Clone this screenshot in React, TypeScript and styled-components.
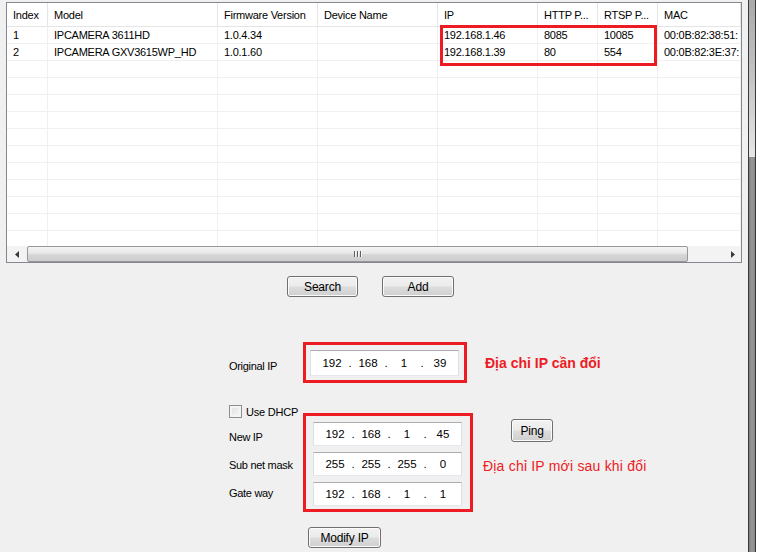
import React from "react"
import styled, { createGlobalStyle } from "styled-components"

const GlobalStyle = createGlobalStyle`
    html, body {
        margin: 0;
        padding: 0;
        background: #ffffff;
    }
    body {
        font-family: "Liberation Sans", Arial, sans-serif;
        font-size: 11px;
        letter-spacing: -0.25px;
        color: #000;
    }
`

type Device = {
    index: string
    model: string
    firmware: string
    name: string
    ip: string
    http: string
    rtsp: string
    mac: string
}

const devices: Device[] = [
    {
        index: "1",
        model: "IPCAMERA 3611HD",
        firmware: "1.0.4.34",
        name: "",
        ip: "192.168.1.46",
        http: "8085",
        rtsp: "10085",
        mac: "00:0B:82:38:51:",
    },
    {
        index: "2",
        model: "IPCAMERA GXV3615WP_HD",
        firmware: "1.0.1.60",
        name: "",
        ip: "192.168.1.39",
        http: "80",
        rtsp: "554",
        mac: "00:0B:82:3E:37:",
    },
]

const columns = ["Index", "Model", "Firmware Version", "Device Name", "IP", "HTTP P...", "RTSP P...", "MAC"]
const COLS = "41px 170px 100px 120px 100px 60px 60px 1fr"

const Page = styled.div`
    display: flex;
    height: 552px;
    overflow: hidden;
`

const Main = styled.div`
    width: 748px;
    flex-shrink: 0;
    background: #f0f0f0;
    display: flex;
    flex-direction: column;
`

const SideStrip = styled.div`
    width: 6px;
    flex-shrink: 0;
    border-left: 1px solid #3a3a3a;
    border-right: 1px solid #3a3a3a;
    display: flex;
    flex-direction: column;
`

const StripTrack = styled.div`
    height: 157px;
    background: linear-gradient(to bottom, #a9a9a9 0%, #c4c4c4 50%, #e6e6e6 100%);
`

const StripThumb = styled.div`
    flex: 1;
    background: linear-gradient(to right, #7f7f7f, #9a9a9a 50%, #858585);
`

const WhiteFill = styled.div`
    flex: 1;
    background: #fff;
`

const ListView = styled.div`
    margin: 2px 0 0 6px;
    width: 736px;
    height: 261px;
    box-sizing: border-box;
    border: 1px solid #828790;
    background: #fff;
    display: flex;
    flex-direction: column;
`

const TableArea = styled.div`
    position: relative;
    flex: 1;
    overflow: hidden;
`

const HeaderRow = styled.div`
    display: grid;
    grid-template-columns: ${COLS};
    height: 23px;
    border-bottom: 1px solid #e5e5e5;
`

const HeaderCell = styled.div`
    display: flex;
    align-items: center;
    padding: 1px 6px 0;
    border-right: 1px solid #e5e5e5;
    white-space: nowrap;
    overflow: hidden;
`

const Row = styled.div`
    display: grid;
    grid-template-columns: ${COLS};
    height: 17px;
`

const Cell = styled.div`
    display: flex;
    align-items: center;
    padding: 0 6px;
    border-right: 1px solid #f0f0f0;
    border-bottom: 1px solid #f0f0f0;
    white-space: nowrap;
    overflow: hidden;
`

const Highlight = styled.div`
    position: absolute;
    left: 433px;
    top: 22px;
    width: 217px;
    height: 41px;
    box-sizing: border-box;
    border: 3px solid #ed1c24;
    pointer-events: none;
`

const HScroll = styled.div`
    height: 16px;
    background: #f3f3f3;
    display: flex;
    align-items: stretch;
`

const ArrowBox = styled.div<{ $w: number }>`
    width: ${(p) => p.$w}px;
    display: flex;
    align-items: center;
    justify-content: center;
`

const Thumb = styled.div`
    width: 661px;
    box-sizing: border-box;
    border: 1px solid #979797;
    border-radius: 2px;
    background: linear-gradient(to bottom, #f4f4f4 0%, #e8e8e8 45%, #d6d6d6 55%, #cdcdcd 100%);
    display: flex;
    align-items: center;
    justify-content: center;
    gap: 1px;
`

const Grip = styled.span`
    width: 1px;
    height: 6px;
    background: #5e5e5e;
    box-shadow: 1px 0 0 #f7f7f7;
    margin-right: 1px;
`

const TrackRest = styled.div`
    flex: 1;
`

const ButtonRow = styled.div`
    display: flex;
    gap: 24px;
    margin-top: 13px;
    padding-left: 287px;
`

const WinButton = styled.button<{ $w: number; $h?: number }>`
    width: ${(p) => p.$w}px;
    height: ${(p) => p.$h ?? 21}px;
    padding: 0;
    box-sizing: border-box;
    border: 1px solid #707070;
    border-radius: 3px;
    background: linear-gradient(to bottom, #f2f2f2 0%, #ebebeb 48%, #dddddd 52%, #cfcfcf 100%);
    box-shadow: inset 0 0 0 1px #fbfbfb;
    font-family: "Liberation Sans", Arial, sans-serif;
    font-size: 12px;
    letter-spacing: -0.2px;
    color: #000;
`

const OriginalRow = styled.div`
    display: flex;
    align-items: center;
    margin-top: 45px;
    padding-left: 229px;
`

const FieldLabel = styled.div<{ $h?: number; $drop?: number }>`
    width: 74px;
    height: ${(p) => (p.$h ? `${p.$h}px` : "auto")};
    padding-top: ${(p) => p.$drop ?? 0}px;
    display: flex;
    align-items: center;
    letter-spacing: -0.3px;
    white-space: nowrap;
`

const RedBox = styled.div<{ $w: number; $h: number; $pad: string }>`
    width: ${(p) => p.$w}px;
    height: ${(p) => p.$h}px;
    box-sizing: border-box;
    border: 3px solid #ed1c24;
    padding: ${(p) => p.$pad};
    display: flex;
    flex-direction: column;
    gap: 6px;
    flex-shrink: 0;
`

const IpField = styled.div<{ $h: number }>`
    width: 149px;
    height: ${(p) => p.$h}px;
    box-sizing: border-box;
    background: #fff;
    border: 1px solid #dbdfe6;
    border-top-color: #abadb3;
    border-bottom-color: #e3e9ef;
    display: flex;
    align-items: center;
    padding-left: 8px;
    font-size: 11.5px;
    letter-spacing: 0;
`

const Octet = styled.span`
    width: 26px;
    text-align: center;
`

const Dot = styled.span`
    width: 10px;
    text-align: center;
`

const Note = styled.div<{ $bold?: boolean }>`
    color: #ed1c24;
    font-weight: ${(p) => (p.$bold ? 700 : 400)};
    font-size: 14px;
    letter-spacing: ${(p) => (p.$bold ? "0" : "0.2px")};
    white-space: nowrap;
`

const DhcpSection = styled.div`
    display: flex;
    margin-top: 22px;
    padding-left: 229px;
`

const LabelColumn = styled.div`
    display: flex;
    flex-direction: column;
    width: 74px;
`

const CheckRow = styled.label`
    display: flex;
    align-items: center;
    gap: 4px;
    height: 13px;
    letter-spacing: -0.2px;
    white-space: nowrap;
`

const CheckBox = styled.span`
    width: 13px;
    height: 13px;
    box-sizing: border-box;
    border: 1px solid #8e8f8f;
    background: linear-gradient(135deg, #dcdcdc, #fbfbfb);
    box-shadow: inset 0 0 0 2px #f4f4f4;
`

const LabelStack = styled.div`
    display: flex;
    flex-direction: column;
    margin-top: 5px;
`

const BoxColumn = styled.div`
    margin-top: 8px;
`

const SideColumn = styled.div`
    display: flex;
    flex-direction: column;
`

const PingWrap = styled.div`
    margin: 14px 0 0 38px;
`

const SideNote = styled.div`
    margin: 16px 0 0 10px;
`

const ModifyRow = styled.div`
    margin-top: 15px;
    padding-left: 308px;
`

const IpValue: React.FC<{ value: string; h: number }> = ({ value, h }) => {
    const parts = value.split(".")
    return (
        <IpField $h={h}>
            {parts.map((p, i) => (
                <React.Fragment key={i}>
                    <Octet>{p}</Octet>
                    {i < parts.length - 1 && <Dot>.</Dot>}
                </React.Fragment>
            ))}
        </IpField>
    )
}

const LeftArrow = () => (
    <svg width="4" height="7" viewBox="0 0 4 7">
        <polygon points="4,0 4,7 0,3.5" fill="#3c3c3c" />
    </svg>
)

const RightArrow = () => (
    <svg width="4" height="7" viewBox="0 0 4 7">
        <polygon points="0,0 0,7 4,3.5" fill="#3c3c3c" />
    </svg>
)

const App: React.FC = () => {
    const emptyRows = Array.from({ length: 12 })

    return (
        <>
            <GlobalStyle />
            <Page>
                <Main>
                    <ListView>
                        <TableArea>
                            <HeaderRow>
                                {columns.map((c) => (
                                    <HeaderCell key={c}>{c}</HeaderCell>
                                ))}
                            </HeaderRow>
                            {devices.map((d) => (
                                <Row key={d.index}>
                                    <Cell>{d.index}</Cell>
                                    <Cell>{d.model}</Cell>
                                    <Cell>{d.firmware}</Cell>
                                    <Cell>{d.name}</Cell>
                                    <Cell>{d.ip}</Cell>
                                    <Cell>{d.http}</Cell>
                                    <Cell>{d.rtsp}</Cell>
                                    <Cell>{d.mac}</Cell>
                                </Row>
                            ))}
                            {emptyRows.map((_, i) => (
                                <Row key={`e${i}`}>
                                    {columns.map((c) => (
                                        <Cell key={c} />
                                    ))}
                                </Row>
                            ))}
                            <Highlight />
                        </TableArea>
                        <HScroll>
                            <ArrowBox $w={20}>
                                <LeftArrow />
                            </ArrowBox>
                            <Thumb>
                                <Grip />
                                <Grip />
                                <Grip />
                            </Thumb>
                            <TrackRest />
                            <ArrowBox $w={17}>
                                <RightArrow />
                            </ArrowBox>
                        </HScroll>
                    </ListView>

                    <ButtonRow>
                        <WinButton $w={71}>Search</WinButton>
                        <WinButton $w={72}>Add</WinButton>
                    </ButtonRow>

                    <OriginalRow>
                        <FieldLabel $drop={6}>Original IP</FieldLabel>
                        <RedBox $w={164} $h={41} $pad="5px 5px 4px 4px">
                            <IpValue value="192.168.1.39" h={26} />
                        </RedBox>
                        <Note $bold style={{ marginLeft: 18 }}>
                            Địa chỉ IP cần đổi
                        </Note>
                    </OriginalRow>

                    <DhcpSection>
                        <LabelColumn>
                            <CheckRow>
                                <CheckBox />
                                Use DHCP
                            </CheckRow>
                            <LabelStack>
                                <FieldLabel $h={28}>New IP</FieldLabel>
                                <FieldLabel $h={28}>Sub net mask</FieldLabel>
                                <FieldLabel $h={28}>Gate way</FieldLabel>
                            </LabelStack>
                        </LabelColumn>
                        <BoxColumn>
                            <RedBox $w={170} $h={99} $pad="6px 8px 3px 7px">
                                <IpValue value="192.168.1.45" h={24} />
                                <IpValue value="255.255.255.0" h={24} />
                                <IpValue value="192.168.1.1" h={24} />
                            </RedBox>
                        </BoxColumn>
                        <SideColumn>
                            <PingWrap>
                                <WinButton $w={42} $h={23}>
                                    Ping
                                </WinButton>
                            </PingWrap>
                            <SideNote>
                                <Note>Địa chỉ IP mới sau khi đổi</Note>
                            </SideNote>
                        </SideColumn>
                    </DhcpSection>

                    <ModifyRow>
                        <WinButton $w={73}>Modify IP</WinButton>
                    </ModifyRow>
                </Main>
                <SideStrip>
                    <StripTrack />
                    <StripThumb />
                </SideStrip>
                <WhiteFill />
            </Page>
        </>
    )
}

export default App
